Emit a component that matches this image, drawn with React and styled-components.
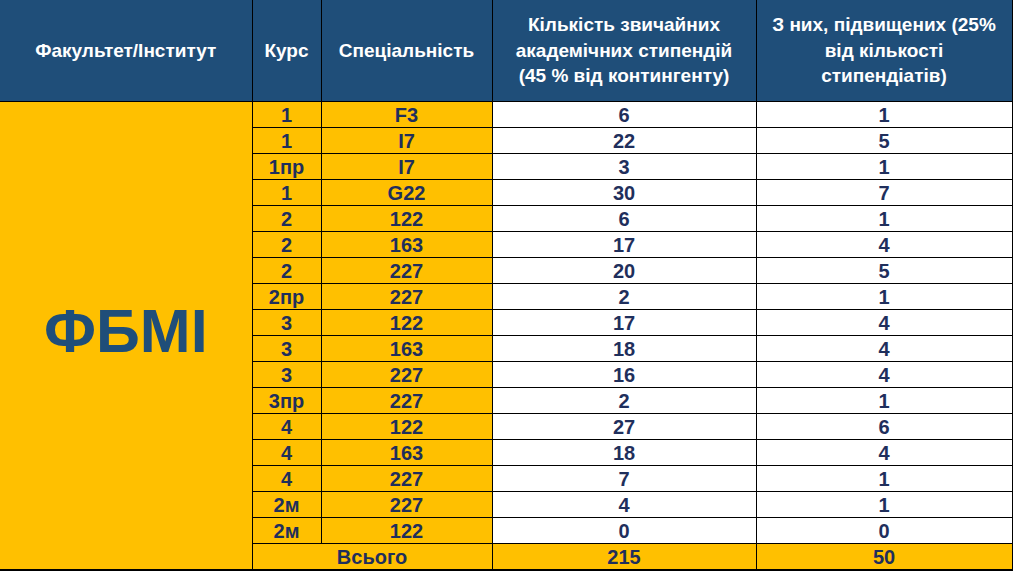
import React from "react";
import styled, { createGlobalStyle } from "styled-components";

const Global = createGlobalStyle`
  html, body { margin: 0; padding: 0; background: #ffffff; }
  body { font-family: "Liberation Sans", Arial, sans-serif; }
`;

const Table = styled.table`
  border-collapse: collapse;
  table-layout: fixed;
  width: 1012px;
  font-family: "Liberation Sans", Arial, sans-serif;
  font-weight: bold;
`;

const Col = styled.col`
  width: ${(p) => p.$w}px;
`;

const HeadCell = styled.th`
  height: 101px;
  padding: 0 2px;
  background: #1f4e79;
  color: #ffffff;
  font-size: 19px;
  line-height: 25.5px;
  font-weight: bold;
  text-align: center;
  vertical-align: middle;
  border-left: 1px solid #000;
  border-bottom: 1px solid #000;
  &:first-child { border-left: none; }
  &:last-child { border-right: 1px solid #000; }
`;

const Row = styled.tr`
  height: 26px;
`;

const Cell = styled.td`
  padding: 0;
  height: 25px;
  background: ${(p) => (p.$yellow ? "#ffc000" : "#ffffff")};
  color: #1f2f5c;
  font-size: 20px;
  line-height: 22px;
  text-align: center;
  vertical-align: middle;
  border: 1px solid #000;
  border-bottom-width: ${(p) => (p.$last ? "2px" : "1px")};
`;

const FacultyCell = styled.td`
  background: #ffc000;
  color: #1f4e79;
  font-size: 61px;
  text-align: center;
  vertical-align: middle;
  padding: 0 0 10px 0;
  border-left: none;
  border-right: 1px solid #000;
  border-bottom: 2px solid #000;
`;

const rows = [
  ["1", "F3", 6, 1],
  ["1", "I7", 22, 5],
  ["1пр", "I7", 3, 1],
  ["1", "G22", 30, 7],
  ["2", "122", 6, 1],
  ["2", "163", 17, 4],
  ["2", "227", 20, 5],
  ["2пр", "227", 2, 1],
  ["3", "122", 17, 4],
  ["3", "163", 18, 4],
  ["3", "227", 16, 4],
  ["3пр", "227", 2, 1],
  ["4", "122", 27, 6],
  ["4", "163", 18, 4],
  ["4", "227", 7, 1],
  ["2м", "227", 4, 1],
  ["2м", "122", 0, 0],
];

export default function App() {
  return (
    <>
      <Global />
      <Table>
        <colgroup>
          <Col $w={252} />
          <Col $w={69} />
          <Col $w={171} />
          <Col $w={264} />
          <Col $w={256} />
        </colgroup>
        <thead>
          <tr>
            <HeadCell>Факультет/Інститут</HeadCell>
            <HeadCell>Курс</HeadCell>
            <HeadCell>Спеціальність</HeadCell>
            <HeadCell>
              Кількість звичайних
              <br />
              академічних стипендій
              <br />
              (45 % від контингенту)
            </HeadCell>
            <HeadCell>
              З них, підвищених (25%
              <br />
              від кількості
              <br />
              стипендіатів)
            </HeadCell>
          </tr>
        </thead>
        <tbody>
          {rows.map((r, i) => (
            <Row key={i}>
              {i === 0 && <FacultyCell rowSpan={18}>ФБМІ</FacultyCell>}
              <Cell $yellow>{r[0]}</Cell>
              <Cell $yellow>{r[1]}</Cell>
              <Cell>{r[2]}</Cell>
              <Cell>{r[3]}</Cell>
            </Row>
          ))}
          <Row>
            <Cell $yellow $last colSpan={2}>Всього</Cell>
            <Cell $yellow $last>215</Cell>
            <Cell $yellow $last>50</Cell>
          </Row>
        </tbody>
      </Table>
    </>
  );
}
